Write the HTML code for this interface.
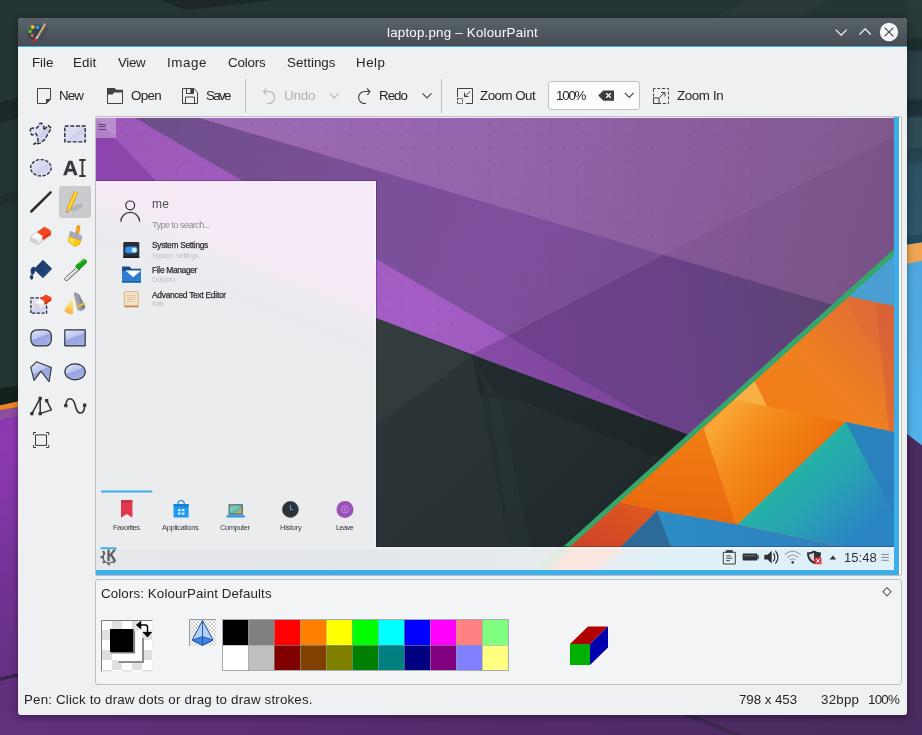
<!DOCTYPE html>
<html><head><meta charset="utf-8"><title>laptop.png – KolourPaint</title>
<style>
html,body{margin:0;padding:0}
body{width:922px;height:735px;position:relative;overflow:hidden;background:#253434;font-family:"Liberation Sans",sans-serif;font-size:13.33px;color:#232629}
.abs{position:absolute}
.t{position:absolute;white-space:pre;will-change:transform}
#win{position:absolute;left:18px;top:18px;width:889px;height:697px;background:#eff0f1;border-radius:4px 4px 3px 3px;box-shadow:0 2px 7px rgba(0,0,0,.42)}
#title{position:absolute;left:0;top:0;width:889px;height:28px;border-radius:4px 4px 0 0;background:linear-gradient(#59626a,#474d54)}
#tline{position:absolute;left:0;top:28px;width:889px;height:1px;background:#3daee9}
svg{position:absolute;overflow:visible}
</style></head><body>
<svg id="desk" width="922" height="735" viewBox="0 0 922 735" style="left:0;top:0">
<defs>
<linearGradient id="dl" x1="0" y1="410" x2="0" y2="735" gradientUnits="userSpaceOnUse"><stop offset="0" stop-color="#8a3aae"/><stop offset=".12" stop-color="#8e38b2"/><stop offset=".45" stop-color="#76349a"/><stop offset="1" stop-color="#5c2d76"/></linearGradient>
<linearGradient id="db" x1="0" y1="0" x2="922" y2="0" gradientUnits="userSpaceOnUse"><stop offset="0" stop-color="#63307e"/><stop offset=".5" stop-color="#552c6c"/><stop offset="1" stop-color="#4a2a5e"/></linearGradient>
<linearGradient id="dr" x1="0" y1="260" x2="0" y2="445" gradientUnits="userSpaceOnUse"><stop offset="0" stop-color="#4ea6de"/><stop offset="1" stop-color="#54b2ea"/></linearGradient>
<linearGradient id="drt" x1="0" y1="0" x2="0" y2="244" gradientUnits="userSpaceOnUse"><stop offset="0" stop-color="#2a3a3a"/><stop offset=".15" stop-color="#283838"/><stop offset=".165" stop-color="#1c2c2e"/><stop offset=".2" stop-color="#1c2c2e"/><stop offset=".215" stop-color="#2a3e42"/><stop offset=".4" stop-color="#2a4046"/><stop offset=".415" stop-color="#1a2e34"/><stop offset=".47" stop-color="#1c3238"/><stop offset=".485" stop-color="#2e4a54"/><stop offset=".6" stop-color="#2e4c58"/><stop offset=".615" stop-color="#24404c"/><stop offset=".66" stop-color="#264452"/><stop offset=".675" stop-color="#2c5062"/><stop offset="1" stop-color="#2e566a"/></linearGradient>
</defs>
<rect width="922" height="735" fill="#253434"/>
<polygon points="160,0 186,10 275,0" fill="#1c2828"/>
<polygon points="745,0 830,0 800,18 715,18" fill="#2a3838"/>
<polygon points="0,102 18,98 18,118.5 0,122.6" fill="#1b2929"/>
<polygon points="0,196 18,190 18,200 0,206" fill="#202e2e"/>
<polygon points="0,388 18,386 18,404 0,407" fill="#15211f"/>
<polygon points="0,405.5 18,401.5 18,735 0,735" fill="url(#dl)"/>
<polygon points="0,409 18,407 18,416 0,420" fill="#8d4e9e"/>
<polygon points="0,405.5 18,401.5 18,407 0,410" fill="#f0891a"/>
<rect x="0" y="712" width="922" height="23" fill="url(#db)"/>
<polygon points="680,714 690,714 744,735 734,735" fill="#3d2850"/>
<polygon points="0,677.5 18,673.3 18,676.8 0,681" fill="#3a2548"/>
<rect x="907" y="0" width="15" height="250" fill="url(#drt)"/>
<polygon points="907,236 922,234 922,245 907,248" fill="#234a5c"/>
<polygon points="907,244.7 922,242.6 922,735 907,735" fill="url(#dr)"/>
<polygon points="907,244.7 922,242.6 922,260.8 907,263.8" fill="#f0a555"/>
<polygon points="907,434 922,445.6 922,735 907,735" fill="#4a2a60"/>
</svg>

<div id="win">
<div id="title"></div><div id="tline"></div>
</div>
<svg width="922" height="735" viewBox="0 0 922 735" style="left:0;top:0">
<defs>
<linearGradient id="pal" x1="0" y1="0" x2=".8" y2=".9"><stop offset="0" stop-color="#76868f"/><stop offset=".3" stop-color="#4a5b65"/><stop offset=".6" stop-color="#32434d"/><stop offset="1" stop-color="#36454e"/></linearGradient>
</defs>
<!-- app icon -->
<path d="M34.3 23.3c4.6 0 8 3.2 8 7.6 0 3-1.6 3.8-3.4 4.2-1.6.4-1.2 2.2-2.2 3.6-1.2 1.5-3.6 1.4-5.8.2-2.8-1.5-4.6-4.4-4.6-7.6 0-4.5 3.6-8 8-8z" fill="url(#pal)"/>
<circle cx="32.7" cy="27" r="1.9" fill="#f5c211"/>
<circle cx="37.6" cy="27.3" r="1.8" fill="#2d9be8"/>
<circle cx="30.1" cy="31.4" r="1.8" fill="#5bc21f"/>
<circle cx="32.3" cy="35.5" r="1.7" fill="#ee5a3a"/>
<path d="M47.3 27.5L40.500 40.500" stroke="#2a3036" stroke-width="2.200" stroke-linecap="round" opacity=".28"/>
<path d="M45 24.300L38 36" stroke="#d0ad72" stroke-width="2" stroke-linecap="round"/>
<path d="M37.800 36.200l-1.800 2.800" stroke="#d4d9dc" stroke-width="2"/>
<path d="M35.300 38.200l1.900 1.200c-.8 1.600-2.800 2.400-5.200 2.400 1.600-1 1.800-2.800 3.300-3.600z" fill="#e5212b"/>
<!-- window buttons -->
<path d="M835.7 29.6l5.5 5.5 5.5-5.5" fill="none" stroke="#fcfcfc" stroke-width="1.2"/>
<path d="M859.5 34.5l5.6-5.6 5.6 5.6" fill="none" stroke="#fcfcfc" stroke-width="1.2"/>
<circle cx="889" cy="32" r="9.2" fill="#f4f5f5"/>
<path d="M884.6 27.6l8.8 8.8M893.4 27.6l-8.8 8.8" stroke="#454c53" stroke-width="1.25"/>
</svg>

<div class="abs" style="left:548px;top:81px;width:92px;height:29px;box-sizing:border-box;border:1px solid #bdc1c5;border-radius:3px;background:#fcfcfc"></div>
<svg width="922" height="735" viewBox="0 0 922 735" style="left:0;top:0">
<g fill="none" stroke="#3f4347" stroke-width="1">
<!-- separators -->
<path d="M245.5 79v34M441.5 79v34" stroke="#bfc3c6"/>
<!-- new -->
<path d="M37.5 88.5h13v11l-4 4h-9z"/>
<path d="M46 99h5l-5 5z" fill="#3f4347" stroke="none"/>
<path d="M46.5 103v-3.5h3.5" />
<!-- open -->
<path d="M107.5 90v13.5h15v-12"/>
<path d="M107 88h7.6l1.6 1.8h6.8v2.8h-8.8l-1.6 1.9h-5.6z" fill="#3f4347" stroke="none"/>
<!-- save -->
<path d="M182.5 88.5h11.3l3.7 3.7v11.3h-15z"/>
<path d="M186.5 88.5v5h7v-5"/>
<rect x="190.3" y="89" width="2.8" height="4" fill="#3f4347" stroke="none"/>
<path d="M185.5 103.5v-6.500h9v6.500"/>
<!-- undo (disabled) -->
<g stroke="#b2b5b8" stroke-width="1.1">
<path d="M266.8 88.3l-3.2 3.2 2.6 3.4M263.8 91.5h4.700a6 6 0 0 1 0 12h-1.500"/>
<path d="M329.600 93.300l4.500 4.600 4.500-4.600"/>
</g>
<!-- redo -->
<g stroke-width="1.1">
<path d="M366.800 88.300l3.200 3.200-2.600 3.400M369.800 91.500h-5.200a6 6 0 0 0 0 12h1.500"/>
<path d="M422.500 93.300l4.500 4.600 4.500-4.600"/>
</g>
<!-- zoom out -->
<path d="M457.500 97v-8.500h15v15h-6.500"/>
<rect x="457.500" y="98.500" width="5" height="5" stroke-dasharray="2 1"/>
<path d="M470.200 91.400l-5.600 5.200M464.500 92.500v4h4"/>
<!-- combo -->
<path d="M598.200 95.500l5.200-5.100h10.600v10.300h-10.600z" fill="#3a3e42" stroke="none"/>
<path d="M606.200 93.200l4.600 4.600M610.800 93.200l-4.600 4.600" stroke="#fcfcfc" stroke-width="1.3"/>
<path d="M624.800 92.900l4.400 4.500 4.400-4.500" stroke-width="1.1"/>
<!-- zoom in -->
<rect x="653.500" y="88.500" width="15" height="15" stroke-dasharray="3 1.800" stroke-dashoffset="1"/>
<rect x="653.500" y="98" width="5.500" height="5.500" fill="#eff0f1"/>
<path d="M659.500 97.500l5.400-5M661 92.500h4v4"/>
</g>
</svg>

<div class="abs" style="left:59px;top:186px;width:32px;height:32px;border-radius:3px;background:#c9ccce"></div>
<svg width="922" height="735" viewBox="0 0 922 735" style="left:0;top:0">
<defs>
<linearGradient id="lav" x1="0" y1="0" x2="1" y2="1"><stop offset="0" stop-color="#e4e6f6"/><stop offset=".5" stop-color="#d6d9f0"/><stop offset=".52" stop-color="#cdd1ec"/><stop offset="1" stop-color="#dfe1f4"/></linearGradient>
<linearGradient id="blu" x1=".1" y1="0" x2=".6" y2="1"><stop offset="0" stop-color="#e0e4f8"/><stop offset=".5" stop-color="#bcc4ee"/><stop offset=".52" stop-color="#98a4e2"/><stop offset="1" stop-color="#a4aee6"/></linearGradient>
<linearGradient id="spr" x1="72.600" y1="297.500" x2="68" y2="313" gradientUnits="userSpaceOnUse"><stop offset="0" stop-color="#fff38a"/><stop offset=".5" stop-color="#ffd54a"/><stop offset="1" stop-color="#ff9c1a"/></linearGradient>
<linearGradient id="can" x1="72" y1="303" x2="84" y2="300" gradientUnits="userSpaceOnUse"><stop offset="0" stop-color="#777986"/><stop offset=".45" stop-color="#a4a6b4"/><stop offset="1" stop-color="#6d6f7c"/></linearGradient>
<linearGradient id="buck" x1="36" y1="262" x2="50" y2="276" gradientUnits="userSpaceOnUse"><stop offset="0" stop-color="#17366a"/><stop offset="1" stop-color="#234a7e"/></linearGradient>
</defs>
<g stroke-linejoin="round">
<!-- 1 freeform select -->
<path d="M30.400 129.300L31.700 128.200L37.400 127.700L39.700 123.500L41.900 123.300L44 126.500L43.600 130.200L48.200 125.400L51.400 128.200L47.500 134.500L45 139.400L40.300 143.100L33.900 144.200L38.100 141.300L37.400 136.700L35.900 133.400L33.200 134.800L31.300 134.700L30.200 130.300Z" fill="url(#lav)" stroke="#2a2e32" stroke-width="1.400" stroke-dasharray="4 1.700"/>
<!-- 2 rect select -->
<rect x="64.800" y="126" width="20.400" height="15.900" fill="url(#lav)" stroke="#2a2e32" stroke-width="1.400" stroke-dasharray="3.900 1.700"/>
<!-- 3 ellipse select -->
<ellipse cx="40.900" cy="167.800" rx="10.300" ry="8.200" fill="url(#lav)" stroke="#2a2e32" stroke-width="1.300" stroke-dasharray="3.200 1.600"/>
<!-- 4 text -->
<path d="M79.200 160h6.400M79.200 176h6.400M82.400 160v16" stroke="#34383c" stroke-width="1.900" fill="none"/>
<!-- 5 line -->
<path d="M31.300 211.500L50.600 192.400" stroke="#2a2e32" stroke-width="2.500" stroke-linecap="round"/>
<!-- 6 pen -->
<ellipse cx="76.500" cy="207.300" rx="7" ry="2.600" transform="rotate(-24 76.500 207.300)" fill="#b3b6b9"/>
<path d="M74.300 191.600l3.400 1.300-7.500 16.900-3.200 2.700.1-4.100z" fill="#ffc90a" stroke="#e89000" stroke-width=".700"/>
<path d="M75.600 192.100l1 .4-7.400 16.700-1-.4z" fill="#ffe45c"/>
<path d="M67.100 208.500l3.100 1.300-3.200 2.700z" fill="#f3d2ae" stroke="#d08a40" stroke-width=".500"/>
<path d="M67 211.200l.9.400-.9.900z" fill="#2a2e32"/>
<!-- 7 eraser -->
<path d="M30.500 236.700l6.500-4.600 5.500 3.900-4.600 4.100z" fill="#fbfbfb"/>
<path d="M37 232.100l7.500-5.400 6.500 4-8.500 5.300z" fill="#f4441c"/>
<path d="M30.500 236.700l7.400 3.400v4.400l-6.900-3.200z" fill="#d4d4d4"/>
<path d="M37.900 240.100l4.600-4.100v4.600l-4.600 3.900z" fill="#ececec"/>
<path d="M42.500 236l8.500-5.300v4.300l-8.500 5.600z" fill="#e63610"/>
<path d="M30.500 236.700l14-10 6.500 4v4.300l-13.100 9.500-6.900-3.200z" fill="none" stroke="#b0a8a0" stroke-width=".500"/>
<!-- 8 brush -->
<path d="M78.300 225.200c1.400.1 1.900 1.300 1.600 3l-1.300 6.500-2.900-.9 1-6.400c.2-1.400.8-2.200 1.600-2.200z" fill="#f3a21c" stroke="#d88410" stroke-width=".500"/>
<path d="M70.400 231.200l11.400 4.700-.9 4.800-11.600-4.300z" fill="#a4a8c4" stroke="#8a8eaa" stroke-width=".500"/>
<path d="M69.300 236.400l11.600 4.300-1.400 3.600-4.600 2.400-6.700-5.200z" fill="#ffc90a" stroke="#e89a10" stroke-width=".600"/>
<path d="M70 237.300l5 1.900-1 5.800-4.800-3.700z" fill="#ffdf4a"/>
<!-- 9 flood fill -->
<path d="M43 260.200l8.600 8.600-8.600 9-7.300-7.100c-.8 0-1.300.6-1.500 1.400l-.2 1.400c-.2 1-2.600 1-2.800-.3-.3-2.400-.2-4.600.8-5.500.9-.8 2.300-.6 3.500.2z" fill="url(#buck)" stroke="#17366a" stroke-width=".800"/>
<ellipse cx="31.600" cy="277.100" rx="1.700" ry="2.700" fill="#1d3f72"/>
<!-- 10 colour picker -->
<path d="M77.700 266.700l2.400 2.400-12.300 11c-1.200 1-2.800 .4-3-.8-.1-.6 .1-1.200 .7-1.800z" fill="#f2f2f2" stroke="#4a4e52" stroke-width=".900"/>
<path d="M78.900 268l.7.700-11.600 10.400-.7-.7z" fill="#b8bcc0"/>
<path d="M76 265.600l6.200-5.600c1.200-1 2.800-.8 3.700.2.900 1 .8 2.600-.3 3.600l-5.900 5.300c-.5.400-1.100.4-1.500 0l-2.300-2.200c-.4-.4-.4-.9.100-1.300z" fill="#14a514" stroke="#0a7a0a" stroke-width=".600"/>
<path d="M79.200 263.300l3.500-3c.6-.4 1.400-.4 1.800 0" stroke="#7fe07f" stroke-width=".900" fill="none"/>
<!-- 11 colour eraser -->
<rect x="30.900" y="297.900" width="15.700" height="15.300" fill="url(#lav)" stroke="#2a2e32" stroke-width="1.300" stroke-dasharray="3.200 1.500"/>
<path d="M34.700 302.400l5.200-3.700 4.400 2.300-4.700 4z" fill="#fbfbfb"/>
<path d="M39.900 298.700l5.700-4.200 5.700 2.800-7 4z" fill="#f4441c"/>
<path d="M34.700 302.400l4.900 2.600v3.700l-4.700-2.600z" fill="#d6d6d6"/>
<path d="M39.600 305l4.700-4v3.700l-4.700 4z" fill="#ececec"/>
<path d="M44.300 301l7-3.700v3.500l-7 3.900z" fill="#e63610"/>
<!-- 12 spraycan -->
<path d="M72.600 297.500l.6 16.600c-3.400.6-7.200-1-9-3.700z" fill="url(#spr)" opacity=".8"/>
<path d="M74 295l2.400-1.900 2.700 1.200 5.800 11.300c.9 2-.1 3.600-2.200 4.700-2.200 1-4.200.9-5.300-1z" fill="url(#can)"/>
<path d="M73.600 293.200l2-1 1.200 2.200-2.100 1.100z" fill="#8d8f9b"/>
<path d="M76.300 305.900l7.900-3.700.9 1.900-7.900 3.700z" fill="#e6c42a"/>
<!-- 13 rounded rect -->
<rect x="30.900" y="329.800" width="20.400" height="16.100" rx="5.800" fill="url(#blu)" stroke="#2e3236" stroke-width="1.200"/>
<!-- 14 rect -->
<rect x="64.800" y="329.800" width="20.400" height="16.100" rx=".5" fill="url(#blu)" stroke="#2e3236" stroke-width="1.200"/>
<!-- 15 polygon -->
<path d="M36.500 361.800l14.900 5.600-2.300 14.200-8.200-10.400-6.800 9.100-3.400-13z" fill="url(#blu)" stroke="#2e3236" stroke-width="1.100"/>
<!-- 16 ellipse -->
<ellipse cx="75.100" cy="371.800" rx="10.200" ry="8" fill="url(#blu)" stroke="#2e3236" stroke-width="1.200"/>
<!-- 17 connected lines -->
<path d="M31.900 413.600l8.300-15.300v15.300l11.100-3.700-4.600-9.300" fill="none" stroke="#2e3236" stroke-width="1.500"/>
<path d="M30.300 412h3.200v3.200h-3.200zM38.600 396.700h3.200v3.200h-3.200zM38.600 412h3.200v3.200h-3.200zM45.100 399h3.200v3.200h-3.200z" fill="#2e3236"/>
<!-- 18 curve -->
<path d="M65.800 405.700c.6-9.200 7.400-9.200 9.500 0 2.100 9.800 9 9.800 9.400-.4" fill="none" stroke="#2e3236" stroke-width="1.600"/>
<path d="M64.200 404h3.200v3.200h-3.200zM83.100 403.600h3.200v3.200h-3.200z" fill="#2e3236"/>
<!-- 19 zoom -->
<rect x="35.500" y="434.900" width="11" height="10.500" fill="none" stroke="#34383c" stroke-width="1"/>
<path d="M33.500 435v-2.500h2.500M46.200 432.500h2.500v2.500M48.700 445v2.500h-2.500M36 447.500h-2.500v-2.500" fill="none" stroke="#34383c" stroke-width="1"/>
</g>
</svg>
<span class="t" style="left:63.3px;top:156.2px;font-size:20.5px;line-height:24px;font-weight:700;color:#34383c;-webkit-text-stroke:.45px #34383c;will-change:transform">A</span>

<div class="abs" style="left:95px;top:116px;width:807px;height:460px;border:1px solid #bcbfc2;border-radius:2px;box-sizing:border-box;background:#fcfcfc"></div>
<div class="abs" style="left:96px;top:117px;width:803px;height:458px;background:#3daee9"></div>
<svg id="cv" width="798" height="453" viewBox="96 117 798 453" style="left:96px;top:117px;overflow:hidden">
<defs>
<linearGradient id="cbase" x1="96" y1="117" x2="894" y2="330" gradientUnits="userSpaceOnUse"><stop offset="0" stop-color="#a06cb8"/><stop offset=".45" stop-color="#9664ac"/><stop offset="1" stop-color="#7d578b"/></linearGradient>
<linearGradient id="cd1" x1="150" y1="117" x2="800" y2="400" gradientUnits="userSpaceOnUse"><stop offset="0" stop-color="#6f4e8a"/><stop offset=".3" stop-color="#7a4f98"/><stop offset=".55" stop-color="#7f4f9e"/><stop offset="1" stop-color="#6a4a84"/></linearGradient>
<linearGradient id="cbr" x1="96" y1="117" x2="640" y2="420" gradientUnits="userSpaceOnUse"><stop offset="0" stop-color="#9b59b8"/><stop offset=".6" stop-color="#a45dc5"/><stop offset="1" stop-color="#9455b4"/></linearGradient>
<linearGradient id="cgray" x1="376" y1="320" x2="600" y2="547" gradientUnits="userSpaceOnUse"><stop offset="0" stop-color="#2d3739"/><stop offset=".5" stop-color="#263032"/><stop offset="1" stop-color="#1f282a"/></linearGradient>
<linearGradient id="cteal" x1="775" y1="465" x2="850" y2="545" gradientUnits="userSpaceOnUse"><stop offset="0" stop-color="#22b8a0"/><stop offset=".45" stop-color="#27a6b0"/><stop offset="1" stop-color="#2b84c4"/></linearGradient>
<linearGradient id="cpop" x1="258.6" y1="205" x2="213.4" y2="317" gradientUnits="userSpaceOnUse"><stop offset="0" stop-color="#f7eaf8"/><stop offset=".38" stop-color="#f5eaf6"/><stop offset=".62" stop-color="#ecebf0"/><stop offset="1" stop-color="#eaecee"/></linearGradient>
<linearGradient id="ctask" x1="96" y1="0" x2="894" y2="0" gradientUnits="userSpaceOnUse"><stop offset="0" stop-color="#e6e8ea"/><stop offset=".3" stop-color="#e4e7ea"/><stop offset=".58" stop-color="#e9ecee"/><stop offset=".7" stop-color="#e2f0f7"/><stop offset="1" stop-color="#dff0f8"/></linearGradient>
<linearGradient id="cB" x1="520" y1="345" x2="860" y2="300" gradientUnits="userSpaceOnUse"><stop offset="0" stop-color="#70408f"/><stop offset=".45" stop-color="#694188"/><stop offset="1" stop-color="#594470"/></linearGradient>
<clipPath id="ctk"><rect x="96" y="547" width="798" height="23"/></clipPath>
<filter id="tblur" x="-20%" y="-50%" width="140%" height="200%"><feGaussianBlur stdDeviation="3"/></filter>
<pattern id="dots" x="101" y="122.5" width="12.5" height="12.5" patternUnits="userSpaceOnUse"><rect x="0" y="0" width="1.2" height="1.2" fill="#3a2a4a" opacity=".22"/></pattern>
<clipPath id="cright"><polygon points="894,254 568,547 894,547"/></clipPath>
<linearGradient id="corg" x1="640" y1="540" x2="880" y2="300" gradientUnits="userSpaceOnUse"><stop offset="0" stop-color="#ee6f0c"/><stop offset=".4" stop-color="#f47c12"/><stop offset=".72" stop-color="#f08020"/><stop offset=".88" stop-color="#e6742e"/><stop offset="1" stop-color="#df6c36"/></linearGradient>
<linearGradient id="corl" x1="700" y1="430" x2="690" y2="525" gradientUnits="userSpaceOnUse"><stop offset="0" stop-color="#f17e14"/><stop offset="1" stop-color="#e8680e"/></linearGradient>
<linearGradient id="corr" x1="715" y1="425" x2="800" y2="490" gradientUnits="userSpaceOnUse"><stop offset="0" stop-color="#f8a636"/><stop offset=".35" stop-color="#f48c1c"/><stop offset=".75" stop-color="#f07a10"/><stop offset="1" stop-color="#ea6c10"/></linearGradient>
<linearGradient id="cblue" x1="660" y1="540" x2="894" y2="500" gradientUnits="userSpaceOnUse"><stop offset="0" stop-color="#2d8cc4"/><stop offset="1" stop-color="#2e7cc0"/></linearGradient>
<linearGradient id="cred" x1="620" y1="500" x2="590" y2="547" gradientUnits="userSpaceOnUse"><stop offset="0" stop-color="#dd5520"/><stop offset="1" stop-color="#cf4528"/></linearGradient>
</defs>
<rect x="96" y="117" width="798" height="453" fill="url(#cbase)"/>
<!-- bright purple below D1 -->
<polygon points="96,117 133.5,117 700,448.5 96,448" fill="url(#cbr)"/>
<polygon points="96,118 320,353 96,353" fill="#8e44ad"/>
<!-- D1 band -->
<polygon points="133.5,117 196,117 894,323 894,562" fill="url(#cd1)"/>
<!-- D2 darkening -->
<polygon points="894,136.5 473,353.6 250,470 250,570 894,570" fill="#2a1040" opacity=".065"/>
<polygon points="664,255 894,323 894,562 507.5,335.8" fill="url(#cB)"/>
<polygon points="507.5,335.8 473,353.6 400,392 700,470 700,448.4" fill="#2a1040" opacity=".15"/>
<!-- gray region -->
<polygon points="96,214 376,318 540,380 686.5,434 700,440 700,570 96,570" fill="url(#cgray)"/>
<polygon points="376,318 472,356 376,425" fill="#3a4244" opacity=".55"/>
<polygon points="376,425 472,356 510,547 376,547" fill="#2d3739" opacity=".5"/>
<polygon points="472,356 686.5,434 660,458 520,400 480,396" fill="#141b1d" opacity=".3"/>
<polygon points="472,356 489,400 510,547 530,547 500,400" fill="#323c3e" opacity=".35"/>
<polygon points="96,117 894,117 894,256 686.5,434 376,318 376,181 96,181" fill="url(#dots)"/>
<!-- colourful right part -->
<g clip-path="url(#cright)">
<rect x="540" y="230" width="360" height="330" fill="url(#corg)"/>
<polygon points="894,240 894,306 846.6,296 860,270" fill="#4a9ed2"/>
<polygon points="846.6,296 894,306 894,360 860,330" fill="#d8683c" opacity=".35"/>
<polygon points="876,303 894,306 894,432 889,431" fill="#d65c38" opacity=".55"/>
<polygon points="703.4,428.5 734,400 767,406 845.4,422 737.6,524.5 736,524.5" fill="url(#corr)"/>
<polygon points="734,400 753.5,379 767,406" fill="#f8b044"/>
<polygon points="619,502.2 703.4,428.5 736,524.5 657,510.4" fill="url(#corl)"/>
<polygon points="845.4,422 737.6,524.5 843,547 894,547 894,432" fill="url(#cteal)"/>
<polygon points="845.4,422 894,432 894,514" fill="#2b7cc0" opacity=".85"/>
<polygon points="657,510.4 737.6,524.5 843,547 600,547" fill="url(#cblue)"/>
<polygon points="657,510.4 671,547 620.7,547" fill="#2c6a9a"/>
<polygon points="600,519 619,502.2 657,510.4 620.7,547 560,547" fill="url(#cred)"/>
</g>
<!-- green stripe -->
<polygon points="894,249 894,256 570.3,546.5 563.4,546.5" fill="#35a76c"/>
<!-- taskbar -->
<rect x="96" y="547" width="798" height="23" fill="url(#ctask)"/>
<g clip-path="url(#ctk)"><g filter="url(#tblur)"><polygon points="573,545 626,545 596,572 543,572" fill="#fbe6e0"/><polygon points="565,545 573,545 543,572 535,572" fill="#d4eedc"/></g></g>
<!-- popup -->
<rect x="96" y="180" width="281" height="1" fill="#2a1a3a" opacity=".3"/>
<rect x="96" y="181" width="280" height="366" fill="url(#cpop)"/>
<rect x="375" y="181" width="1" height="366" fill="#fff" opacity=".5"/>
<rect x="376" y="181" width="1" height="366" fill="#1a1020" opacity=".25"/>
<rect x="96" y="117" width="798" height="1" fill="#fff" opacity=".85"/>
<!-- desktop toolbox -->
<rect x="96" y="118" width="20" height="20" fill="#fff" opacity=".32"/>
<path d="M98.5 124.5h7.5M98.5 126.5h7.5M98.5 129.5h7.5" stroke="#4a3a5a" stroke-width="1" opacity=".8"/>
<!--CVC_S--><!-- user icon -->
<g fill="none" stroke="#2e3236" stroke-width="1.200">
<circle cx="130.200" cy="205.400" r="4.400"/>
<path d="M120.700 221.600c.400-5.400 4.400-9.200 9.500-9.200s9.100 3.800 9.500 9.200"/>
</g>
<!-- system settings icon -->
<rect x="123.300" y="242" width="16" height="16" rx="1.200" fill="#2a2e32"/>
<rect x="123.300" y="256.500" width="16" height="1.500" fill="#1a1c1e"/>
<rect x="125" y="246.600" width="12.600" height="6.600" rx="3.300" fill="#2d8ff0"/>
<circle cx="134.200" cy="249.900" r="2.500" fill="#d6ebff"/>
<!-- file manager icon -->
<path d="M122 266.500h7.500l2 2.300h9.500v13.600h-19z" fill="#174a86"/>
<path d="M122 270.600h19v11.800h-19z" fill="#2e7ed2"/>
<path d="M125.500 270.600h15.500l-7.800 6.600z" fill="#fafcfe"/>
<rect x="122" y="281.200" width="19" height="1.200" fill="#1f5fa6"/>
<!-- kate icon -->
<rect x="124.300" y="291.600" width="14" height="15.300" rx="1" fill="#f3e3c6" stroke="#cfa46e" stroke-width=".800"/>
<rect x="124.300" y="305.500" width="14" height="1.600" fill="#c08a50"/>
<path d="M126.500 295.500h9.500M126.500 297.500h9.500M126.500 299.500h9.500M126.500 301.500h7" stroke="#d9c3a0" stroke-width=".800"/>
<!-- tab indicator -->
<rect x="101" y="490.500" width="51.200" height="2" fill="#3daee9"/>
<!-- favorites -->
<path d="M121 500.300h11.400v17.400l-5.700-3.800-5.700 3.800z" fill="#e0364e"/>
<path d="M121 500.300h11.400v2h-11.400z" fill="#c42a42"/>
<!-- applications -->
<path d="M173.600 504h15v13.500h-15z" fill="#1d99f3"/>
<path d="M173.600 504h15v2.600h-15z" fill="#1681d2"/>
<path d="M177.800 504.500c0-5.400 6.600-5.400 6.600 0" fill="none" stroke="#1681d2" stroke-width="1.100"/>
<path d="M178 509h2.600v2.200h-2.600zM181.800 509h2.600v2.200h-2.600zM178 512.600h2.600v2.200h-2.600zM181.800 512.600h2.600v2.200h-2.600z" fill="#d9efff"/>
<!-- computer -->
<rect x="228.600" y="504.300" width="14.200" height="10.400" fill="#4a5258"/>
<rect x="229.700" y="505.400" width="12" height="8.200" fill="#5fb8a8"/>
<path d="M229.700 513.600v-8.200h12z" fill="#8ad0c0" opacity=".6"/>
<path d="M235 513.600l6.700-5v5z" fill="#e8a040" opacity=".8"/>
<path d="M226.600 515.200h18.200v2.300h-18.200z" fill="#1d99f3"/>
<!-- history -->
<circle cx="290.400" cy="509.400" r="8" fill="#2c3136"/>
<circle cx="290.400" cy="509.400" r="8" fill="none" stroke="#484e54" stroke-width=".800"/>
<path d="M290.400 504.800v4.800h2.800" fill="none" stroke="#3daee9" stroke-width="1"/>
<!-- leave -->
<circle cx="345" cy="509.400" r="8.500" fill="#9b4fb8"/>
<circle cx="345" cy="509.400" r="3.600" fill="none" stroke="#c99ade" stroke-width=".800"/>
<path d="M346 507.600l-1.800 1.800 1.800 1.800" fill="none" stroke="#d9b6ea" stroke-width=".800"/>
<!-- taskbar items -->
<rect x="376" y="546" width="518" height="1" fill="#1a1e22" opacity=".3"/>
<rect x="96" y="547.500" width="798" height="1" fill="#fff" opacity=".6"/>
<rect x="100.500" y="547.300" width="16" height="1.800" fill="#3daee9"/>
<!-- K gear -->
<g fill="#5a6066">
<path d="M104.800 551.400l-1.700-.9-.9 1.600 1.200 1.300c-.5.800-.8 1.600-1 2.500l-1.900.2v1.900l1.900.3c.2.900.5 1.700 1 2.400l-1.200 1.500 1.400 1.300 1.500-1.100c.7.500 1.500.8 2.400 1l.3 1.900h1.900l.3-1.900c.9-.2 1.700-.5 2.400-1l1.500 1.100 1.300-1.300-.9-1.300-2.100.3c-1 .9-2.300 1.400-3.700 1.300-2.600-.2-4.700-2.400-4.700-5 0-1.400.5-2.700 1.500-3.600z"/>
<path d="M107.400 549.400h2.300v5.200l3.700-5.200h2.800l-3.900 5.200 4.300 6.600h-2.800l-3.300-5.200-.800 1v4.200h-2.300z"/>
</g>
<!-- systray -->
<g fill="none" stroke="#3a3e42" stroke-width="1">
<path d="M723.300 552.300h12v11.700h-12z"/>
<path d="M726.300 552.300v-1.600h6v1.600" fill="#3a3e42"/>
<path d="M726 556h5M726 558.300h6.500M726 560.600h4" stroke-width=".900"/>
</g>
<rect x="742.600" y="553.600" width="14.800" height="7" rx=".8" fill="#2e3236"/>
<rect x="757.400" y="555.300" width="1.400" height="3.600" fill="#2e3236"/>
<rect x="744" y="555" width="12" height="1.400" fill="#5a6066"/>
<path d="M764.300 554.800h3.200l4.200-4v12.800l-4.200-4h-3.200z" fill="#2e3236"/>
<path d="M773.300 553.300c2 2.200 2 5.800 0 8M775.400 551c3.400 3.600 3.400 9 0 12.600" fill="none" stroke="#2e3236" stroke-width="1.200"/>
<g fill="none" stroke="#9a9ea2" stroke-width="1.100">
<path d="M784.800 555c4.400-5 11.400-5 15.800 0"/>
<path d="M787.300 557.600c3-3.400 7.800-3.400 10.800 0"/>
<path d="M789.800 560.100c1.600-1.800 4.200-1.800 5.800 0"/>
</g>
<circle cx="792.700" cy="562.400" r="1.300" fill="#3a3e42"/>
<path d="M807 552.600c2.600 0 4.800-.8 7-2 2.200 1.200 4.400 2 7 2 0 5.600-2.200 9.400-7 11.400-4.800-2-7-5.800-7-11.400z" fill="#2e3236"/>
<path d="M809 554.300c1.800-.1 3.400-.7 5-1.500v8.700c-3-1.500-4.800-3.700-5-7.200z" fill="#eceef0" opacity=".85"/>
<rect x="814.500" y="557.500" width="7" height="6.700" fill="#e8303c"/>
<path d="M816.200 559.100l3.600 3.600M819.800 559.100l-3.600 3.600" stroke="#fff" stroke-width="1"/>
<path d="M829.600 559.600l3.300-4.100 3.300 4.100z" fill="#2e3236"/>
<path d="M881.400 554.500h7.500M881.400 557.400h7.500M881.400 560.300h7.500" stroke="#8a8e92" stroke-width="1"/>
<!--CVC_E-->
</svg>

<div class="abs" style="left:95px;top:579px;width:807px;height:106px;border:1px solid #bcbfc2;border-radius:3px;box-sizing:border-box;background:#f3f4f5"></div>
<svg width="922" height="735" viewBox="0 0 922 735" style="left:0;top:0">
<defs>
<pattern id="chk" x="102" y="620" width="20" height="20" patternUnits="userSpaceOnUse"><rect width="20" height="20" fill="#fff"/><rect x="10" y="0" width="10" height="10" fill="#e0e0e0"/><rect x="0" y="10" width="10" height="10" fill="#e0e0e0"/></pattern>
<pattern id="chk2" x="189" y="619" width="4" height="4" patternUnits="userSpaceOnUse"><rect width="4" height="4" fill="#fff"/><rect x="2" y="0" width="2" height="2" fill="#d0d0d0"/><rect x="0" y="2" width="2" height="2" fill="#d0d0d0"/></pattern>
<linearGradient id="pyr" x1="0" y1="0" x2="0" y2="1"><stop offset="0" stop-color="#7ab0f0"/><stop offset="1" stop-color="#2a6ad0"/></linearGradient>
</defs>
<!-- dual colour -->
<rect x="101" y="620" width="51.5" height="51.5" fill="url(#chk)"/>
<path d="M101.5 671.5V620.5H152.5" fill="none" stroke="#7a7e82" stroke-width="1"/>
<rect x="118" y="637" width="24" height="24.5" fill="#fefefe"/>
<path d="M143 638v24h-24.5" fill="none" stroke="#8a8e92" stroke-width="2"/>
<rect x="110" y="629" width="23.5" height="23" fill="#000"/>
<path d="M134.3 630.5v22.3h-23.5" fill="none" stroke="#7a7e82" stroke-width="1.6"/>
<path d="M140 625h5.5q2 0 2 2v5.5" fill="none" stroke="#000" stroke-width="1.5"/>
<path d="M135.9 625l5.2-4.3v8.6z" fill="#000"/>
<path d="M147.4 637.5l-4.9-5.5h9.7z" fill="#000"/>
<!-- transparent -->
<rect x="189" y="619" width="27" height="27" fill="url(#chk2)"/>
<path d="M189.5 646V619.5H216" fill="none" stroke="#9a9ea2" stroke-width="1"/>
<path d="M202.5 620.5l-10.3 19.5 10.3 5.3 10.5-5.3z" fill="#b4d0f4" stroke="#1d4fa8" stroke-width="1" stroke-linejoin="round"/>
<path d="M192.2 640l10.3-3.5 10.5 3.5-10.5 5.3z" fill="#3a84e4" stroke="#1d4fa8" stroke-width=".8" stroke-linejoin="round"/>
<path d="M202.5 620.5v24.8" stroke="#1d4fa8" stroke-width=".9"/>
<!-- palette -->
<rect x="222" y="619" width="26" height="26" fill="#000000"/><rect x="248" y="619" width="26" height="26" fill="#808080"/><rect x="274" y="619" width="26" height="26" fill="#ff0000"/><rect x="300" y="619" width="26" height="26" fill="#ff8000"/><rect x="326" y="619" width="26" height="26" fill="#ffff00"/><rect x="352" y="619" width="26" height="26" fill="#00ff00"/><rect x="378" y="619" width="26" height="26" fill="#00ffff"/><rect x="404" y="619" width="26" height="26" fill="#0000ff"/><rect x="430" y="619" width="26" height="26" fill="#ff00ff"/><rect x="456" y="619" width="26" height="26" fill="#ff8080"/><rect x="482" y="619" width="26" height="26" fill="#80ff80"/><rect x="222" y="645" width="26" height="26" fill="#ffffff"/><rect x="248" y="645" width="26" height="26" fill="#c0c0c0"/><rect x="274" y="645" width="26" height="26" fill="#800000"/><rect x="300" y="645" width="26" height="26" fill="#804000"/><rect x="326" y="645" width="26" height="26" fill="#808000"/><rect x="352" y="645" width="26" height="26" fill="#008000"/><rect x="378" y="645" width="26" height="26" fill="#008080"/><rect x="404" y="645" width="26" height="26" fill="#000080"/><rect x="430" y="645" width="26" height="26" fill="#800080"/><rect x="456" y="645" width="26" height="26" fill="#8080ff"/><rect x="482" y="645" width="26" height="26" fill="#ffff80"/>
<path d="M248.5 619.5v51 M274.5 619.5v51 M300.5 619.5v51 M326.5 619.5v51 M352.5 619.5v51 M378.5 619.5v51 M404.5 619.5v51 M430.5 619.5v51 M456.5 619.5v51 M482.5 619.5v51 M222.5 645.5h286" stroke="#9a9ea2" stroke-width="1" fill="none" opacity=".55"/>
<rect x="222.5" y="619.5" width="286" height="51" fill="none" stroke="#a8acb0" stroke-width="1"/>
<!-- cube -->
<polygon points="570,644 590,644 590,665 570,665" fill="#00b000"/>
<polygon points="570,644 590,644 608,626.5 588,626.5" fill="#b00000"/>
<polygon points="590,644 608,626.5 608,647.5 590,665" fill="#0000b0"/>
<!-- float diamond -->
<path d="M887 587.7l4.1 4.1-4.1 4.1-4.1-4.1z" fill="none" stroke="#5a5e62" stroke-width="1.1"/>
</svg>
<span class="t" style="left:386.90px;top:24.08px;font-size:13.33px;line-height:17px;height:17px;letter-spacing:0.210px;color:#fcfcfc">laptop.png – KolourPaint</span>
<span class="t" style="left:31.50px;top:54.08px;font-size:13.33px;line-height:17px;height:17px;letter-spacing:-0.021px;color:#232629">File</span>
<span class="t" style="left:72.50px;top:54.08px;font-size:13.33px;line-height:17px;height:17px;letter-spacing:0.079px;color:#232629">Edit</span>
<span class="t" style="left:118.00px;top:54.08px;font-size:13.33px;line-height:17px;height:17px;letter-spacing:-0.341px;color:#232629">View</span>
<span class="t" style="left:167.00px;top:54.08px;font-size:13.33px;line-height:17px;height:17px;letter-spacing:0.592px;color:#232629">Image</span>
<span class="t" style="left:227.50px;top:54.08px;font-size:13.33px;line-height:17px;height:17px;letter-spacing:-0.170px;color:#232629">Colors</span>
<span class="t" style="left:286.70px;top:54.08px;font-size:13.33px;line-height:17px;height:17px;letter-spacing:0.044px;color:#232629">Settings</span>
<span class="t" style="left:356.00px;top:54.08px;font-size:13.33px;line-height:17px;height:17px;letter-spacing:0.500px;color:#232629">Help</span>
<span class="t" style="left:58.70px;top:87.08px;font-size:13.33px;line-height:17px;height:17px;letter-spacing:-0.869px;color:#232629">New</span>
<span class="t" style="left:130.50px;top:87.08px;font-size:13.33px;line-height:17px;height:17px;letter-spacing:-0.664px;color:#232629">Open</span>
<span class="t" style="left:206.00px;top:87.08px;font-size:13.33px;line-height:17px;height:17px;letter-spacing:-1.655px;color:#232629">Save</span>
<span class="t" style="left:283.50px;top:87.08px;font-size:13.33px;line-height:17px;height:17px;letter-spacing:-0.150px;color:#aeb1b4">Undo</span>
<span class="t" style="left:379.00px;top:87.08px;font-size:13.33px;line-height:17px;height:17px;letter-spacing:-0.983px;color:#232629">Redo</span>
<span class="t" style="left:480.30px;top:87.08px;font-size:13.33px;line-height:17px;height:17px;letter-spacing:-0.507px;color:#232629">Zoom Out</span>
<span class="t" style="left:555.80px;top:87.08px;font-size:13.33px;line-height:17px;height:17px;letter-spacing:-1.212px;color:#232629">100%</span>
<span class="t" style="left:676.50px;top:87.08px;font-size:13.33px;line-height:17px;height:17px;letter-spacing:-0.379px;color:#232629">Zoom In</span>
<span class="t" style="left:100.50px;top:585.08px;font-size:13.33px;line-height:17px;height:17px;letter-spacing:0.116px;color:#232629">Colors: KolourPaint Defaults</span>
<span class="t" style="left:23.70px;top:691.28px;font-size:13.33px;line-height:17px;height:17px;letter-spacing:0.181px;color:#232629">Pen: Click to draw dots or drag to draw strokes.</span>
<span class="t" style="left:739.00px;top:691.38px;font-size:13.33px;line-height:17px;height:17px;letter-spacing:-0.054px;color:#232629">798 x 453</span>
<span class="t" style="left:821.00px;top:691.38px;font-size:13.33px;line-height:17px;height:17px;letter-spacing:0.213px;color:#232629">32bpp</span>
<span class="t" style="left:867.80px;top:691.38px;font-size:13.33px;line-height:17px;height:17px;letter-spacing:-0.779px;color:#232629">100%</span>
<span class="t" style="left:151.70px;top:196.64px;font-size:12px;line-height:15px;height:15px;letter-spacing:0.304px;color:#4a4d52">me</span>
<span class="t" style="left:151.70px;top:218.58px;font-size:9.3px;line-height:12px;height:12px;letter-spacing:-0.665px;color:#8e9094">Type to search...</span>
<span class="t" style="left:151.70px;top:240.39px;font-size:8.4px;line-height:10px;height:10px;letter-spacing:-0.302px;color:#2a2e32;-webkit-text-stroke:.25px #2a2e32">System Settings</span>
<span class="t" style="left:151.70px;top:250.64px;font-size:7.4px;line-height:9px;height:9px;letter-spacing:-0.472px;color:#c2c4ca">System Settings</span>
<span class="t" style="left:151.70px;top:265.09px;font-size:8.4px;line-height:10px;height:10px;letter-spacing:-0.317px;color:#2a2e32;-webkit-text-stroke:.25px #2a2e32">File Manager</span>
<span class="t" style="left:151.70px;top:274.84px;font-size:7.4px;line-height:9px;height:9px;letter-spacing:-0.309px;color:#c2c4ca">Dolphin</span>
<span class="t" style="left:151.70px;top:289.59px;font-size:8.4px;line-height:10px;height:10px;letter-spacing:-0.255px;color:#2a2e32;-webkit-text-stroke:.25px #2a2e32">Advanced Text Editor</span>
<span class="t" style="left:151.70px;top:299.44px;font-size:7.4px;line-height:9px;height:9px;letter-spacing:-0.931px;color:#c2c4ca">Kate</span>
<span class="t" style="left:112.70px;top:522.77px;font-size:7.6px;line-height:10px;height:10px;letter-spacing:-0.516px;color:#3a3e42">Favorites</span>
<span class="t" style="left:162.20px;top:522.77px;font-size:7.6px;line-height:10px;height:10px;letter-spacing:-0.377px;color:#3a3e42">Applications</span>
<span class="t" style="left:219.90px;top:522.77px;font-size:7.6px;line-height:10px;height:10px;letter-spacing:-0.488px;color:#3a3e42">Computer</span>
<span class="t" style="left:279.70px;top:522.77px;font-size:7.6px;line-height:10px;height:10px;letter-spacing:-0.322px;color:#3a3e42">History</span>
<span class="t" style="left:335.90px;top:522.77px;font-size:7.6px;line-height:10px;height:10px;letter-spacing:-0.717px;color:#3a3e42">Leave</span>
<span class="t" style="left:843.50px;top:549.50px;font-size:13px;line-height:16px;height:16px;letter-spacing:0.025px;color:#2e3236">15:48</span>
</body></html>
